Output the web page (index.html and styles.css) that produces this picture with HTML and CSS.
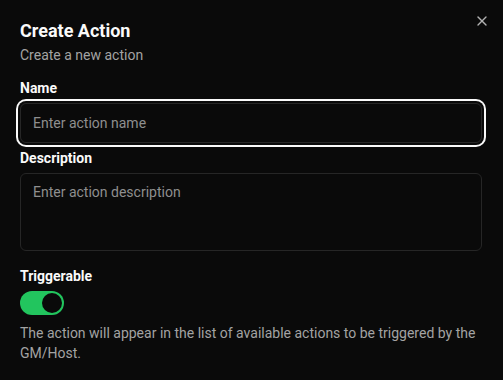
FILE: index.html
```html
<!DOCTYPE html>
<html lang="en">
<head>
  <meta charset="UTF-8">
  <meta name="viewport" content="width=device-width, initial-scale=1.0">
  <title>Create Action</title>
  <link rel="stylesheet" href="styles.css">
</head>
<body>
  <div class="dialog">
    <button class="close" aria-label="Close">
      <svg width="16" height="16" viewBox="0 0 24 24" fill="none" stroke="currentColor" stroke-width="2" stroke-linecap="round" stroke-linejoin="round"><path d="M18 6 6 18"/><path d="m6 6 12 12"/></svg>
    </button>
    <div class="header">
      <div class="title">Create Action</div>
      <div class="subtitle">Create a new action</div>
    </div>
    <div class="form">
      <div class="field">
        <label class="label" for="name">Name</label>
        <input class="input focused" id="name" type="text" placeholder="Enter action name">
      </div>
      <div class="field">
        <label class="label" for="desc">Description</label>
        <textarea class="textarea" id="desc" placeholder="Enter action description"></textarea>
      </div>
      <div class="field trigger">
        <label class="label">Triggerable</label>
        <div class="switch on"><span class="thumb"></span></div>
        <p class="hint">The action will appear in the list of available actions to be triggered by the GM/Host.</p>
      </div>
    </div>
  </div>
</body>
</html>
```

FILE: styles.css
```css
html, body {
  margin: 0;
  padding: 0;
  background-color: #0a0a0a;
  overflow: hidden;
}
body {
  font-family: Roboto, "Noto Sans", sans-serif;
  color: #fafafa;
}
.dialog {
  position: relative;
  padding: 17px 20px 20px 20px;
  box-sizing: border-box;
  width: 503px;
  height: 380px;
}
.close {
  position: absolute;
  top: 13px;
  right: 13px;
  background: none;
  border: none;
  padding: 0;
  color: #fafafa;
  opacity: 0.7;
  display: flex;
}
.header {
  display: flex;
  flex-direction: column;
}
.title {
  font-size: 18px;
  line-height: 28px;
  font-weight: 700;
}
.subtitle {
  font-size: 14px;
  line-height: 20px;
  color: #a3a3a3;
}
.form {
  display: flex;
  flex-direction: column;
  gap: 8px;
  margin-top: 16px;
}
.field {
  display: flex;
  flex-direction: column;
  gap: 8px;
}
.label {
  font-size: 14px;
  line-height: 14px;
  font-weight: 700;
  color: #fafafa;
}
.input, .textarea {
  font-family: inherit;
  font-size: 14px;
  background-color: #0a0a0a;
  color: #fafafa;
  border: 1px solid #262626;
  border-radius: 6px;
  box-sizing: border-box;
  width: 462px;
  padding: 8px 12px;
  outline: none;
}
.input {
  height: 40px;
}
.focused {
  box-shadow: 0 0 0 2px #0a0a0a, 0 0 0 4px #fafafa;
}
.textarea {
  height: 78px;
  resize: none;
  line-height: 20px;
}
.input::placeholder, .textarea::placeholder {
  color: #8f8f8f;
}
.trigger {
  margin-top: 10px;
}
.switch {
  width: 44px;
  height: 24px;
  border-radius: 12px;
  background-color: #22c55e;
  display: flex;
  align-items: center;
  padding: 2px;
  box-sizing: border-box;
}
.switch.on {
  justify-content: flex-end;
}
.thumb {
  width: 20px;
  height: 20px;
  border-radius: 50%;
  background-color: #0a0a0a;
}
.hint {
  margin: 0;
  font-size: 14px;
  line-height: 20px;
  color: #a3a3a3;
}
```
